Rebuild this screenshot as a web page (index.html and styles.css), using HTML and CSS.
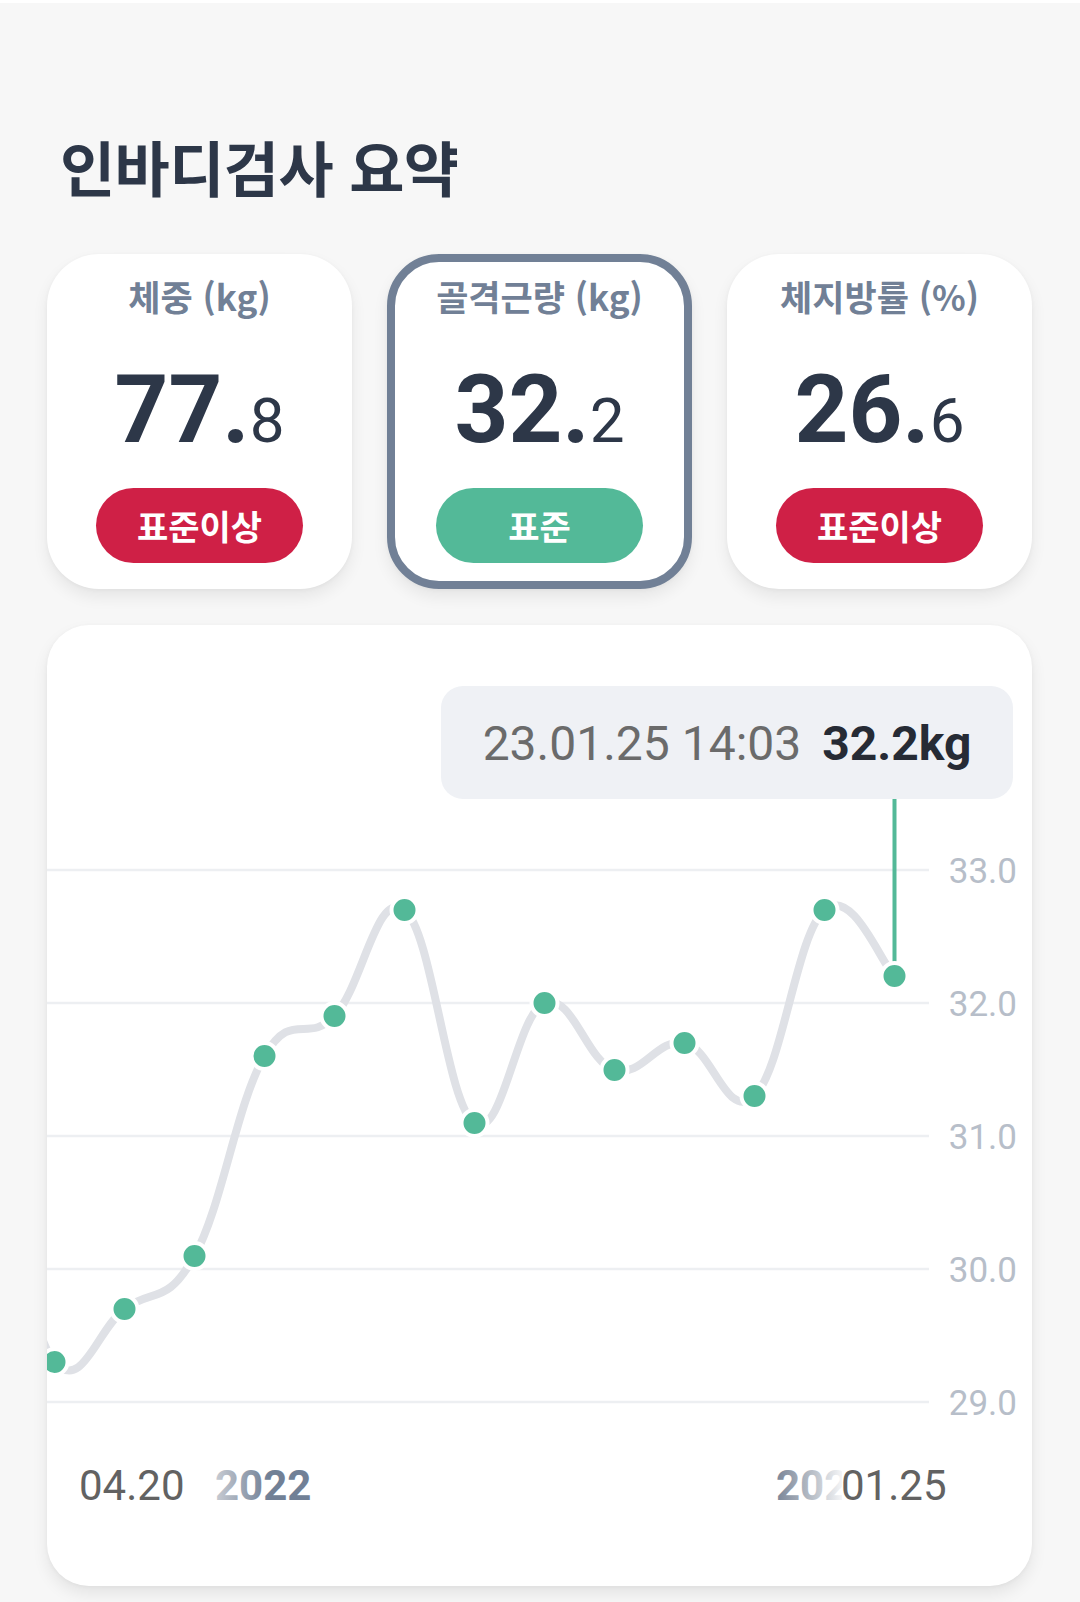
FILE: index.html
```html
<!DOCTYPE html>
<html lang="ko">
<head>
    <meta charset="UTF-8">
    <meta name="viewport" content="width=device-width, initial-scale=1.0">
    <title>인바디검사 요약</title>
    <link rel="stylesheet" href="styles.css">
</head>
<body>
    <div class="page">
        <h1 class="title">인바디검사 요약</h1>

        <div class="cards">
            <div class="card">
                <p class="label">체중 (kg)</p>
                <p class="value"><span class="int">77.</span><span class="dec">8</span></p>
                <span class="badge over">표준이상</span>
            </div>
            <div class="card active">
                <p class="label">골격근량 (kg)</p>
                <p class="value"><span class="int">32.</span><span class="dec">2</span></p>
                <span class="badge normal">표준</span>
            </div>
            <div class="card">
                <p class="label">체지방률 (%)</p>
                <p class="value"><span class="int">26.</span><span class="dec">6</span></p>
                <span class="badge over">표준이상</span>
            </div>
        </div>

        <div class="chart">
            <div class="tooltip">
                <span class="time">23.01.25 14:03</span>
                <span class="amount">32.2kg</span>
            </div>
            <svg class="graph" width="985" height="961" viewBox="47 625 985 961">
                <defs>
                    <linearGradient id="yearLeft" gradientUnits="userSpaceOnUse" x1="215" y1="0" x2="268" y2="0">
                        <stop offset="0" stop-color="#c8ccd3"/>
                        <stop offset="1" stop-color="#718096"/>
                    </linearGradient>
                    <linearGradient id="yearRight" gradientUnits="userSpaceOnUse" x1="777" y1="0" x2="842" y2="0">
                        <stop offset="0" stop-color="#7c8799"/>
                        <stop offset="0.6" stop-color="#bfc5cd"/>
                        <stop offset="1" stop-color="#f4f5f7"/>
                    </linearGradient>
                </defs>

                <g class="grid">
                    <line x1="47" y1="870" x2="929" y2="870"/>
                    <line x1="47" y1="1003" x2="929" y2="1003"/>
                    <line x1="47" y1="1136" x2="929" y2="1136"/>
                    <line x1="47" y1="1269" x2="929" y2="1269"/>
                    <line x1="47" y1="1402" x2="929" y2="1402"/>
                </g>
                <g class="ylabels">
                    <text x="1017" y="883">33.0</text>
                    <text x="1017" y="1016">32.0</text>
                    <text x="1017" y="1149">31.0</text>
                    <text x="1017" y="1282">30.0</text>
                    <text x="1017" y="1415">29.0</text>
                </g>

                <path class="curve" d="M -15.5 1154 C 12.5 1170 26.5 1331 54.5 1362
                    C 82.5 1393 96.5 1330.2 124.5 1309
                    C 152.5 1287.8 166.5 1306.6 194.5 1256
                    C 222.5 1205.4 236.5 1104 264.5 1056
                    C 292.5 1008 306.5 1045.2 334.5 1016
                    C 362.5 986.8 376.5 888.6 404.5 910
                    C 432.5 931.4 446.5 1104.4 474.5 1123
                    C 502.5 1141.6 516.5 1013.6 544.5 1003
                    C 572.5 992.4 586.5 1062 614.5 1070
                    C 642.5 1078 656.5 1037.8 684.5 1043
                    C 712.5 1048.2 726.5 1122.6 754.5 1096
                    C 782.5 1069.4 796.5 934 824.5 910
                    C 852.5 886 880.5 962.8 894.5 976"/>

                <line class="marker" x1="894.5" y1="799" x2="894.5" y2="976"/>

                <g class="dots">
                    <circle cx="54.5" cy="1362" r="13"/>
                    <circle cx="124.5" cy="1309" r="13"/>
                    <circle cx="194.5" cy="1256" r="13"/>
                    <circle cx="264.5" cy="1056" r="13"/>
                    <circle cx="334.5" cy="1016" r="13"/>
                    <circle cx="404.5" cy="910" r="13"/>
                    <circle cx="474.5" cy="1123" r="13"/>
                    <circle cx="544.5" cy="1003" r="13"/>
                    <circle cx="614.5" cy="1070" r="13"/>
                    <circle cx="684.5" cy="1043" r="13"/>
                    <circle cx="754.5" cy="1096" r="13"/>
                    <circle cx="824.5" cy="910" r="13"/>
                    <circle cx="894.5" cy="976" r="13"/>
                </g>

                <g class="xlabels">
                    <text class="date" x="79" y="1500">04.20</text>
                    <text class="year" x="215" y="1500" fill="url(#yearLeft)">2022</text>
                    <text class="year" x="776" y="1500" fill="url(#yearRight)">202</text>
                    <rect x="842" y="1460" width="112" height="50" fill="#fff"/>
                    <text class="date" x="841" y="1500">01.25</text>
                </g>
            </svg>
        </div>
    </div>
</body>
</html>
```

FILE: styles.css
```css
body {
    margin: 0;
    background-color: #f7f7f7;
    border-top: 3px solid #fff;
    font-family: "Noto Sans CJK KR", "Noto Sans", sans-serif;
}

.page {
    padding: 0 48px 0 47px;
    height: 1599px;
    box-sizing: border-box;
}

.title {
    margin: 0;
    padding: 127px 0 0 13px;
    font-size: 60px;
    line-height: 72px;
    font-weight: 700;
    letter-spacing: -0.6px;
    color: #2d3748;
}

.cards {
    display: grid;
    grid-template-columns: repeat(3, 1fr);
    gap: 35px;
    margin-top: 52px;
}

.card {
    display: flex;
    flex-direction: column;
    align-items: center;
    height: 335px;
    box-sizing: border-box;
    padding: 12px 0 18px;
    border: 8px solid transparent;
    border-radius: 52px;
    background-color: #fff;
    box-shadow: 0 8px 16px rgba(0, 0, 0, 0.07), 0 1px 4px rgba(0, 0, 0, 0.04);
}

.card.active {
    border-color: #718096;
}

.label {
    margin: 0;
    font-size: 35px;
    line-height: 44px;
    font-weight: 700;
    color: #718096;
}

.value {
    display: flex;
    align-items: baseline;
    margin: 42px 0 0;
    height: 100px;
    line-height: 100px;
    font-family: Roboto, sans-serif;
    color: #2d3748;
}

.value .int {
    font-size: 94px;
    font-weight: 700;
}

.value .dec {
    font-size: 62px;
    font-weight: 400;
}

.badge {
    display: block;
    margin-top: 28px;
    width: 207px;
    height: 75px;
    border-radius: 38px;
    font-size: 34px;
    line-height: 75px;
    font-weight: 700;
    text-align: center;
    color: #fff;
}

.badge.over {
    background-color: #cf2046;
}

.badge.normal {
    background-color: #53b998;
}

.chart {
    position: relative;
    margin-top: 36px;
    height: 961px;
    border-radius: 42px;
    background-color: #fff;
    overflow: hidden;
    box-shadow: 0 8px 16px rgba(0, 0, 0, 0.08), 0 1px 4px rgba(0, 0, 0, 0.04);
}

.graph {
    display: block;
}

.tooltip {
    position: absolute;
    left: 394px;
    top: 61px;
    width: 572px;
    height: 113px;
    box-sizing: border-box;
    padding-top: 3px;
    display: flex;
    align-items: center;
    justify-content: center;
    border-radius: 22px;
    background-color: #eff1f5;
    font-family: Roboto, sans-serif;
    font-size: 48px;
    line-height: 1;
}

.tooltip .time {
    color: #6b6b6b;
}

.tooltip .amount {
    margin-left: 21px;
    font-weight: 700;
    color: #262b35;
}

.grid line {
    stroke: #edeff2;
    stroke-width: 2.5;
}

.ylabels text {
    font-family: Roboto, sans-serif;
    font-size: 35px;
    fill: #b7bec9;
    text-anchor: end;
}

.curve {
    fill: none;
    stroke: #dfe1e6;
    stroke-width: 8;
    stroke-linecap: round;
}

.marker {
    stroke: #53b998;
    stroke-width: 4;
}

.dots circle {
    fill: #53b998;
    stroke: #fff;
    stroke-width: 4;
}

.xlabels text {
    font-family: Roboto, sans-serif;
    font-size: 42px;
}

.xlabels .date {
    fill: #626262;
}

.xlabels .year {
    font-weight: 700;
}
```
